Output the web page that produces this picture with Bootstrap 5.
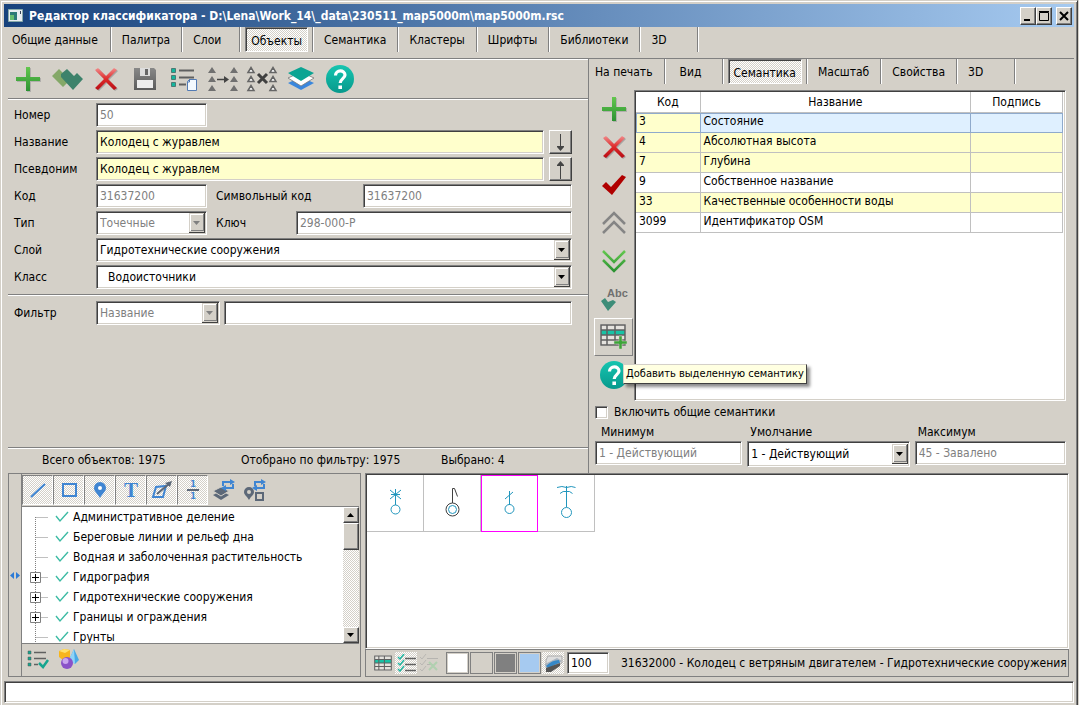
<!DOCTYPE html>
<html lang="ru">
<head>
<meta charset="utf-8">
<meta name="viewport" content="width=device-width, initial-scale=1">
<title>Редактор классификатора</title>
<link href="https://cdn.jsdelivr.net/npm/bootstrap@5.3.0/dist/css/bootstrap.min.css" rel="stylesheet">
<style>
:root { --face:#d4d0c8; --dark:#404040; --mid:#808080; --cream:#ffffcc; }
body { background:var(--face); color:#000; font:12px/16px "DejaVu Sans Condensed","Noto Sans",sans-serif; }
button, input, select { font:inherit; color:inherit; border-radius:0; }
button { background:none; border:0; padding:0; }
svg { display:block; flex:none; }
.win { min-height:100vh; margin-right:1px; padding:3px 3px 2px; border:1px solid var(--face); border-right-color:var(--dark); border-bottom:0; box-shadow:inset 1px 1px #fff, inset -1px 0 var(--mid); }
.titlebar { height:23px; padding:0 2px 0 4px; background:linear-gradient(90deg,#17427c,#a6caf0); color:#fff; font-size:12px; font-weight:700; }
.caption-text { margin-left:6px; }
.raised { background:var(--face); border:1px solid; border-color:#fff var(--dark) var(--dark) #fff; box-shadow:inset -1px -1px var(--mid); }
.cap { width:16px; height:18px; }
.sunk { background:#fff; border:1px solid; border-color:var(--mid) #fff #fff var(--mid); box-shadow:inset 1px 1px var(--dark), inset -1px -1px var(--face); }
.field { height:24px; padding:0 3px; min-width:0; outline:0; }
.field:disabled { color:var(--mid); opacity:1; }
.cream { background-color:var(--cream); }
select.field { appearance:none; padding-left:3px; background:#fff url("data:image/svg+xml,%3Csvg xmlns='http://www.w3.org/2000/svg' width='16' height='20'%3E%3Cpath fill='%23404040' d='M0 0h16v20H0z'/%3E%3Cpath fill='%23d4d0c8' d='M0 0h15v19H0z'/%3E%3Cpath fill='%23808080' d='M1 18h14V1h-1v16H1z'/%3E%3Cpath fill='%23fff' d='M1 1h13v1H2v16H1z'/%3E%3Cpath d='M4 8h7L7.500 12z'/%3E%3C/svg%3E") no-repeat right 1px center; }
select.field:disabled { background-image:url("data:image/svg+xml,%3Csvg xmlns='http://www.w3.org/2000/svg' width='16' height='20'%3E%3Cpath fill='%23404040' d='M0 0h16v20H0z'/%3E%3Cpath fill='%23d4d0c8' d='M0 0h15v19H0z'/%3E%3Cpath fill='%23808080' d='M1 18h14V1h-1v16H1z'/%3E%3Cpath fill='%23fff' d='M1 1h13v1H2v16H1z'/%3E%3Cpath fill='%23808080' d='M4 8h7L7.500 12z'/%3E%3C/svg%3E"); }
.tabs { height:25px; }
.tabs > div { border-right:1px solid var(--mid); box-shadow:1px 0 #fff; min-width:58px; padding:0 11px; display:flex; align-items:center; white-space:nowrap; }
.tabs > div:first-child { padding:0 12px 0 4px; }
.tabs > div.on { padding:0 4px 0 5px; }
.tabs.inner > div:first-child { padding:0 11px 0 6px; }
.tabs .on button { height:100%; padding:2px 5px 0; border:1px solid; border-color:var(--mid) #fff #fff var(--mid); box-shadow:inset 1px 1px var(--dark); }
.hatch { background:repeating-conic-gradient(#fff 0 25%,var(--face) 0 50%) 0 0/2px 2px; }
.groove-t { border-top:1px solid var(--mid); box-shadow:inset 0 1px #fff; }
.work { margin-top:6px; }
.objpane { flex:580 1 0; min-width:0; }
.sempane { flex:485 1 0; min-width:0; border-left:1px solid var(--mid); border-top:1px solid var(--mid); }
.tools { height:40px; }
.tools button, .vtools button { width:39px; height:38px; display:flex; align-items:center; justify-content:center; }
.tools button { height:40px; }
.form { display:grid; grid-template-columns:82px 1fr; row-gap:3px; padding:4px 16px 5px 6px; align-items:center; }
.form.filter { padding-top:6px; }
.form select.indent { padding-left:11px; }
.w-num { width:111px; }
.w-filter { width:124px; }
.sym-label { width:156px; padding-left:9px; flex:none; }
.key-label { width:89px; padding-left:9px; flex:none; }
.step { width:23px; height:24px; margin-left:5px; }
.counts { height:26px; padding-left:34px; }
.counts span:first-child { width:199px; }
.counts span:nth-child(2) { width:200px; }
.gridrow { padding:6px 8px 0 5px; }
.vtools { width:39px; margin-right:1px; flex:none; }
.hot { border:1px solid; border-color:#fff var(--mid) var(--mid) #fff; }
.gridbox { min-height:311px; padding:1px 2px 1px 1px; }
.sem { width:100%; table-layout:fixed; border-collapse:collapse; }
.sem th, .sem td { height:20px; padding:0 3px; border:solid #c0c0c0; border-width:0 1px 1px 0; font-weight:400; line-height:16px; }
.sem td { padding-bottom:2px; line-height:17px; }
.sem th { text-align:center; }
.sem .sel td { background:#dff0ff; border-color:#8faacc; box-shadow:inset 0 1px #8faacc; }
.sem .sel td:first-child { background:var(--cream); box-shadow:inset 1px 1px #8faacc; }
.tip { position:absolute; left:34px; top:280px; z-index:5; white-space:nowrap; font-size:11px; line-height:16px; padding:1px 2px; background:#ffffe1; border:1px solid; border-color:var(--face) var(--dark) var(--dark) var(--face); box-shadow:3px 3px 3px rgba(0,0,0,.45); }
.tick { appearance:none; width:13px; height:13px; margin:0; flex:none; }
.below { padding:3px 8px 6px 6px; }
.below .lab { padding-left:6px; }
.limits { display:grid; grid-template-columns:147fr 162fr 151fr; column-gap:5px; margin-top:4px; row-gap:1px; align-items:start; }
.limits label:not(.lab) { padding-left:3px; }
.limits select.field { height:26px; }
.lower { flex:1 1 204px; min-height:204px; }
.side { flex:0 1 353px; border:1px solid var(--mid); }
.split { width:13px; border-right:1px solid var(--mid); flex:none; }
.sidetools { height:32px; padding-top:1px; }
.sidebottom { height:32px; }
.tgl { width:31px; height:30px; display:flex; align-items:center; justify-content:center; }
.tgl.hatch { border:1px solid; border-color:var(--mid) #fff #fff var(--mid); }
.treebox { flex:1 1 0; min-height:0; overflow:hidden; margin-right:1px; background:#fff; border:solid var(--mid); border-width:1px 0; }
.tree li { height:20px; padding-left:8px; display:flex; align-items:center; white-space:nowrap; }
.tree li span { padding-left:4px; }
.bar { width:16px; flex:none; }
.bar .raised { width:16px; height:16px; display:flex; align-items:center; justify-content:center; }
.bar .thumb { height:27px; }
.viewer { margin-right:5px; }
.canvas { flex:1 1 0; min-height:100px; overflow:hidden; padding:1px; }
.cell { width:57px; height:57px; border:solid #c0c0c0; border-width:0 1px 1px 0; }
.cell.pick { border:1px solid #ff00ff; }
.objbar { height:28px; border:1px solid var(--mid); padding-left:6px; overflow:hidden; gap:1px; }
.sw { width:23px; height:22px; border:1px solid var(--mid); box-shadow:inset 0 0 0 1px var(--face); flex:none; }
.sw.first { margin-left:5px; background:#fff; }
.sw.dim { background:#808080; }
.sw.sky { background:#a6caf0; }
.mini { width:22px; height:22px; flex:none; display:flex; align-items:center; justify-content:center; }
.scale { width:42px; height:22px; margin-left:2px; flex:none; }
.info { margin:0 1px 0 11px; overflow:hidden; }
.status { height:22px; outline:0; }
</style>
</head>
<body>
<svg width="0" height="0" class="position-absolute" aria-hidden="true">
<defs>
<linearGradient id="gr" x2="0" y2="1"><stop stop-color="#63c74e"/><stop offset="1" stop-color="#2b9232"/></linearGradient>
<linearGradient id="rd" x2="0" y2="1"><stop stop-color="#f28a8a"/><stop offset=".5" stop-color="#dd2a2a"/><stop offset="1" stop-color="#b80c14"/></linearGradient>
<linearGradient id="tl" x2="0" y2="1"><stop stop-color="#16c5b0"/><stop offset="1" stop-color="#07998c"/></linearGradient>
<linearGradient id="gy" x2="0" y2="1"><stop stop-color="#888"/><stop offset="1" stop-color="#5c5c5c"/></linearGradient>
</defs>
<symbol id="plus" viewBox="0 0 28 28"><path d="M13 3h4v10h10v4H17v10h-4V17H3v-4h10z" fill="#999" opacity=".6"/><path d="M12 2h4v10h10v4H16v10h-4V16H2v-4h10z" fill="url(#gr)"/></symbol>
<symbol id="cross" viewBox="0 0 28 28"><path d="M4 6l3-2 8 8 8-8 3 2-9 9 9 9-3 2-8-8-8 8-3-2 9-9z" fill="#888" opacity=".6"/><path d="M3 5l3-2 8 8 8-8 3 2-9 9 9 9-3 2-8-8-8 8-3-2 9-9z" fill="url(#rd)"/></symbol>
<symbol id="help" viewBox="0 0 28 28"><circle cx="14" cy="14" r="14" fill="url(#tl)"/><path d="M9.500 10.500c0-6 9.500-6 9.500-.5 0 3.500-4.800 3.800-4.800 8" fill="none" stroke="#fff" stroke-width="3.200"/><rect x="12.400" y="20.500" width="3.600" height="3.500" fill="#fff"/></symbol>
<symbol id="chk" viewBox="0 0 14 12"><path d="M1 5l4 5 8-9" fill="none" stroke="#3dbba4" stroke-width="1.400"/></symbol>
<symbol id="tab" viewBox="0 0 26 22"><path d="M0 0h26v22H0z" fill="#fff" opacity=".4"/><path d="M1 6h24v5H1z" fill="#17c3a5"/><path d="M1 1h24v20H1zM1 6h24M1 11h24M1 16h24M7 1v20M15 1v20" fill="none" stroke="#606060" stroke-width="1.500"/></symbol>
<symbol id="leaf" viewBox="0 0 25 20"><path d="M5.500 0v20M5.500 10.500H18" stroke="#808080" stroke-dasharray="1 1"/></symbol>
<symbol id="node" viewBox="0 0 25 20"><path d="M5.500 0v20M5.500 10.500H18" stroke="#808080" stroke-dasharray="1 1"/><path d="M.5 5.500h10v10H.5z" fill="#fff" stroke="#808080"/><path d="M2 10.500h7M5.500 7v7" stroke="#000"/></symbol>
</svg>

<div class="win d-flex flex-column">
  <header class="titlebar d-flex align-items-center">
    <svg width="15" height="13"><path fill="#e9eef2" stroke="#8aa" d="M.5.5h14v12H.5z"/><path fill="#2d7a78" d="M2 3h7v8H2z"/><path fill="#68bf72" d="M2 6h4v5H2z"/><path stroke="#345" d="M12.500 2v3"/></svg>
    <span class="caption-text me-auto text-nowrap">Редактор классификатора - D:\Lena\Work_14\_data\230511_map5000m\map5000m.rsc</span>
    <button class="raised cap" aria-label="Свернуть"><svg width="14" height="15"><path d="M3 11h6v2H3z"/></svg></button>
    <button class="raised cap" aria-label="Развернуть"><svg width="14" height="15"><path d="M2.500 4.500h9v8h-9zM2 3.500h10" fill="none" stroke="#000"/></svg></button>
    <button class="raised cap ms-1" aria-label="Закрыть"><svg width="14" height="15"><path d="M3 4l8 8M11 4l-8 8" stroke="#000" stroke-width="2"/></svg></button>
  </header>

  <nav class="tabs d-flex ms-1">
    <div><button>Общие данные</button></div><div><button>Палитра</button></div><div><button>Слои</button></div>
    <div class="on"><button class="hatch">Объекты</button></div>
    <div><button>Семантика</button></div><div><button>Кластеры</button></div><div><button>Шрифты</button></div><div><button>Библиотеки</button></div><div><button>3D</button></div>
  </nav>

  <main class="work d-flex ms-1">
    <section class="objpane d-flex flex-column">
      <div class="tools groove-t d-flex">
        <button aria-label="Добавить"><svg width="28" height="28"><use href="#plus"/></svg></button>
        <button aria-label="Копировать"><svg width="32" height="24"><path d="M1 9l7-7 5 5 3-3 5 7-9 9z" fill="#84a868"/><path d="M10 7l6-5 4 4 3 3 3-3 6 6-10 11L10 10z" fill="#3d826b"/></svg></button>
        <button aria-label="Удалить"><svg width="28" height="28"><use href="#cross"/></svg></button>
        <button aria-label="Сохранить"><svg width="24" height="24"><path d="M1 1h20l2 2v20H1z" fill="url(#gy)"/><path d="M7 1h10v8H7z" fill="#ddd"/><path d="M12 2h3v6h-3z" fill="#666"/><path d="M4 13h16v8H4z" fill="#eee"/></svg></button>
        <button aria-label="Список"><svg width="28" height="26"><path d="M1.500 2.500h4v4h-4zM1.500 9.500h4v4h-4zM1.500 16.500h4v4h-4z" fill="#14b59d" stroke="#4c7a74"/><path d="M9 4.500h15M9 11.500h15M9 18.500h7" stroke="#606060" stroke-width="2"/><path d="M19.500 13.500h7v11h-9v-9z" fill="#f4faff" stroke="#537bb4"/><path d="M19.500 13v3h-2" fill="none" stroke="#537bb4"/></svg></button>
        <button aria-label="Заменить"><svg width="32" height="26"><path d="M1 7l4-6 4 6zM1 16l4-6 4 6zM1 25l4-6 4 6zM23 7l4-6 4 6zM23 16l4-6 4 6zM23 25l4-6 4 6z" fill="#707070"/><path d="M10 13.500h8" stroke="#444" stroke-width="1.500"/><path d="M17 10l5 3.500-5 3.500z" fill="#444"/></svg></button>
        <button aria-label="Исключить"><svg width="32" height="26"><path d="M2 6.500l3-5 3 5zM2 15.500l3-5 3 5zM2 24.500l3-5 3 5zM24 6.500l3-5 3 5zM24 15.500l3-5 3 5zM24 24.500l3-5 3 5z" fill="#fff" stroke="#666" stroke-width="1.500"/><path d="M12 8l9 9M21 8l-9 9" stroke="#404040" stroke-width="3"/></svg></button>
        <button aria-label="Слои"><svg width="28" height="26"><path d="M1 17l13-6 13 6-13 7z" fill="#3a87dd"/><path d="M1 12l13-6 13 6-13 8z" fill="#fff" stroke="#777" stroke-width=".8"/><path d="M1 7l13-6 13 6-13 8z" fill="#0ba493"/></svg></button>
        <button aria-label="Помощь"><svg width="28" height="28"><use href="#help"/></svg></button>
      </div>
      <form class="form groove-t">
        <label for="num">Номер</label><input id="num" class="field sunk w-num" value="50" disabled>
        <label for="nam">Название</label><div class="d-flex"><input id="nam" class="field sunk cream flex-grow-1" value="Колодец с журавлем"><button type="button" class="raised step" aria-label="Вниз"><svg width="21" height="22"><path d="M10.500 3v14" stroke="#444"/><path d="M7 15h7v1l-3.500 4L7 16z" fill="#444"/></svg></button></div>
        <label for="psv">Псевдоним</label><div class="d-flex"><input id="psv" class="field sunk cream flex-grow-1" value="Колодец с журавлем"><button type="button" class="raised step" aria-label="Вверх"><svg width="21" height="22"><path d="M10.500 5v16" stroke="#444"/><path d="M7 8h7V7l-3.500-4L7 7z" fill="#444"/></svg></button></div>
        <label for="cod">Код</label><div class="d-flex align-items-center"><input id="cod" class="field sunk w-num" value="31637200" disabled><label for="sym" class="sym-label">Символьный код</label><input id="sym" class="field sunk flex-grow-1" value="31637200" disabled></div>
        <label for="typ">Тип</label><div class="d-flex align-items-center"><select id="typ" class="field sunk w-num" disabled><option>Точечные</option></select><label for="key" class="key-label">Ключ</label><input id="key" class="field sunk flex-grow-1" value="298-000-P" disabled></div>
        <label for="lay">Слой</label><select id="lay" class="field sunk"><option>Гидротехнические сооружения</option></select>
        <label for="cls">Класс</label><select id="cls" class="field sunk indent"><option>Водоисточники</option></select>
      </form>
      <form class="form filter groove-t flex-grow-1 align-content-start">
        <label for="flt">Фильтр</label><div class="d-flex"><select id="flt" class="field sunk w-filter me-1" disabled><option>Название</option></select><input class="field sunk flex-grow-1" aria-label="Текст фильтра"></div>
      </form>
      <div class="groove-t d-flex pt-1 counts"><span>Всего объектов: 1975</span><span>Отобрано по фильтру: 1975</span><span>Выбрано: 4</span></div>
    </section>

    <section class="sempane">
      <nav class="tabs inner d-flex">
        <div><button>На печать</button></div><div><button class="ps-1">Вид</button></div>
        <div class="on"><button class="hatch">Семантика</button></div>
        <div><button>Масштаб</button></div><div><button>Свойства</button></div><div><button>3D</button></div>
      </nav>
      <div class="gridrow d-flex position-relative">
        <div class="vtools">
          <button aria-label="Добавить семантику"><svg width="28" height="28"><use href="#plus"/></svg></button>
          <button aria-label="Удалить семантику"><svg width="28" height="28"><use href="#cross"/></svg></button>
          <button aria-label="Отметить"><svg width="26" height="24"><path d="M1 13l4-4 5 5L21 2l4 2-14 18z" fill="#b00000"/></svg></button>
          <button aria-label="Выше"><svg width="26" height="26" fill="none" stroke="#858585" stroke-width="2.500"><path d="M2 14L13 3l11 11M2 23l11-11 11 11"/></svg></button>
          <button aria-label="Ниже"><svg width="26" height="26" fill="none" stroke="url(#gr)" stroke-width="2.500"><path d="M2 3l11 11L24 3M2 12l11 11 11-11"/></svg></button>
          <button aria-label="Переименовать"><svg width="30" height="26"><text x="8" y="11" font-family="Liberation Sans,sans-serif" font-weight="700" font-size="11" fill="#707070">Abc</text><path d="M2 15l4-3 3 4 5-2 3 2-8 9z" fill="#3d8d78"/></svg></button>
          <button class="hot" aria-label="Добавить выделенную семантику"><svg width="28" height="26"><use href="#tab" width="26" height="22"/><path d="M19 12h3v5h5v3h-5v5h-3v-5h-5v-3h5z" fill="#3da539" stroke="#d4d0c8" stroke-width=".5"/></svg></button>
          <button aria-label="Справка"><svg width="28" height="28"><use href="#help"/></svg></button>
        </div>
        <div class="gridbox sunk flex-grow-1">
          <table class="sem">
            <colgroup><col style="width:64px"><col><col style="width:92px"></colgroup>
            <thead><tr><th>Код</th><th>Название</th><th>Подпись</th></tr></thead>
            <tbody>
              <tr class="sel"><td>3</td><td>Состояние</td><td></td></tr>
              <tr class="cream"><td>4</td><td>Абсолютная высота</td><td></td></tr>
              <tr class="cream"><td>7</td><td>Глубина</td><td></td></tr>
              <tr><td>9</td><td>Собственное название</td><td></td></tr>
              <tr class="cream"><td>33</td><td>Качественные особенности воды</td><td></td></tr>
              <tr><td>3099</td><td>Идентификатор OSM</td><td></td></tr>
            </tbody>
          </table>
        </div>
        <div class="tip" role="tooltip">Добавить выделенную семантику</div>
      </div>
      <div class="below">
        <div class="d-flex align-items-center"><input type="checkbox" id="all" class="tick sunk"><label for="all" class="lab">Включить общие семантики</label></div>
        <div class="limits">
          <label for="mn" class="lab">Минимум</label><label for="df">Умолчание</label><label for="mx">Максимум</label>
          <input id="mn" class="field sunk" value="1 - Действующий" disabled>
          <select id="df" class="field sunk"><option>1 - Действующий</option></select>
          <input id="mx" class="field sunk" value="45 - Завалено" disabled>
        </div>
      </div>
    </section>
  </main>

  <div class="lower d-flex ms-1 gap-1">
    <aside class="side d-flex">
      <div class="split d-flex align-items-center"><svg width="12" height="9"><path d="M1 4.500L5 1v7zM11 4.500L7 1v7z" fill="#2d7bd6"/></svg></div>
      <div class="d-flex flex-column flex-grow-1 overflow-hidden">
        <div class="sidetools d-flex">
          <button class="tgl hatch" aria-label="Линии"><svg width="20" height="20"><path d="M3 17L17 4" stroke="#3f85d2" stroke-width="2"/></svg></button>
          <button class="tgl hatch" aria-label="Площади"><svg width="20" height="20"><path d="M4 4h13v12H4z" fill="none" stroke="#3f85d2" stroke-width="2"/></svg></button>
          <button class="tgl hatch" aria-label="Точки"><svg width="20" height="20"><path d="M10 18C7 13 4 11 4 8a6 6 0 0 1 12 0c0 3-3 5-6 10z" fill="#3f85d2"/><circle cx="10" cy="8" r="2" fill="#fff"/></svg></button>
          <button class="tgl hatch" aria-label="Подписи"><svg width="20" height="26"><text x="10" y="20" text-anchor="middle" font-family="Liberation Serif,serif" font-weight="700" font-size="21" fill="#3f85d2">T</text></svg></button>
          <button class="tgl hatch" aria-label="Векторы"><svg width="22" height="22"><path d="M2 18L5 8l10-1-3 11z" fill="none" stroke="#3f85d2" stroke-width="2"/><path d="M6 15L19 4" stroke="#5c6878" stroke-width="2"/><path d="M21 2l-7 2 5 4z" fill="#5c6878"/></svg></button>
          <button class="tgl hatch" aria-label="Шаблоны"><svg width="16" height="24"><path d="M2 12h12" stroke="#5c6878" stroke-width="2"/><text x="8" y="9" text-anchor="middle" font-size="9" font-weight="700" fill="#3f85d2">1</text><text x="8" y="21" text-anchor="middle" font-size="9" font-weight="700" fill="#3f85d2">1</text></svg></button>
          <button class="tgl" aria-label="Порядок слоёв"><svg width="24" height="24"><path d="M1 17l8-4 8 4-8 5z" fill="#5c6878"/><path d="M1 13l8-4 8 4-8 5z" fill="#5c6878" stroke="#d4d0c8"/><path d="M11 8V4h10M21 6v4H11" fill="none" stroke="#3f85d2" stroke-width="2"/><path d="M18 1l5 3-5 3zM14 7l-5 3 5 3z" fill="#3f85d2"/></svg></button>
          <button class="tgl" aria-label="Порядок объектов"><svg width="24" height="24"><path d="M6 22c-2-4-5-5-5-8a5 5 0 0 1 10 0c0 3-3 4-5 8z" fill="#5c6878"/><circle cx="6" cy="14" r="2" fill="#d4d0c8"/><path d="M13 15h7v7h-7z" fill="none" stroke="#5c6878" stroke-width="2"/><path d="M12 8V4h9M21 6v4H12" fill="none" stroke="#3f85d2" stroke-width="2"/><path d="M18 1l5 3-5 3zM14 7l-5 3 5 3z" fill="#3f85d2"/></svg></button>
        </div>
        <div class="treebox d-flex">
          <ul class="tree list-unstyled mb-0 flex-grow-1 overflow-hidden">
            <li><svg width="25" height="20"><path d="M5.500 10v10M5.500 10.500H18" stroke="#808080" stroke-dasharray="1 1"/></svg><svg width="14" height="12"><use href="#chk"/></svg><span>Административное деление</span></li>
            <li><svg width="25" height="20"><use href="#leaf"/></svg><svg width="14" height="12"><use href="#chk"/></svg><span>Береговые линии и рельеф дна</span></li>
            <li><svg width="25" height="20"><use href="#leaf"/></svg><svg width="14" height="12"><use href="#chk"/></svg><span>Водная и заболоченная растительность</span></li>
            <li><svg width="25" height="20"><use href="#node"/></svg><svg width="14" height="12"><use href="#chk"/></svg><span>Гидрография</span></li>
            <li><svg width="25" height="20"><use href="#node"/></svg><svg width="14" height="12"><use href="#chk"/></svg><span>Гидротехнические сооружения</span></li>
            <li><svg width="25" height="20"><use href="#node"/></svg><svg width="14" height="12"><use href="#chk"/></svg><span>Границы и ограждения</span></li>
            <li><svg width="25" height="20"><use href="#leaf"/></svg><svg width="14" height="12"><use href="#chk"/></svg><span>Грунты</span></li>
          </ul>
          <div class="bar hatch d-flex flex-column">
            <button class="raised" aria-label="Прокрутить вверх"><svg width="8" height="4"><path d="M0 4h7L3.500 0z"/></svg></button>
            <div class="raised thumb"></div>
            <button class="raised mt-auto" aria-label="Прокрутить вниз"><svg width="8" height="4"><path d="M0 0h7L3.500 4z"/></svg></button>
          </div>
        </div>
        <div class="sidebottom d-flex">
          <button class="tgl" aria-label="Отметить все"><svg width="22" height="20"><path d="M1 2h3v3H1zM1 8h3v3H1zM1 14h3v3H1z" fill="#14a58f" stroke="#555" stroke-width=".5"/><path d="M7 3.500h12M7 9.500h12M7 15.500h4" stroke="#606060" stroke-width="1.500"/><path d="M12 14l4 4 5-7" fill="none" stroke="#14a58f" stroke-width="2.500"/></svg></button>
          <button class="tgl" aria-label="Вид объектов"><svg width="22" height="22"><path d="M1 3l5-2 6 1v8l-7 2-4-3z" fill="#f7b51d"/><path d="M1 3l6 2 5-3-6-1z" fill="#ffe06b"/><path d="M16 1l5 11-4 4-6-4z" fill="#48a9e6"/><path d="M16 1l1 15-6-4z" fill="#8fd3f7"/><circle cx="9" cy="15" r="6" fill="#8a52c8"/><circle cx="7.500" cy="13" r="3" fill="#c9a5ee"/></svg></button>
        </div>
      </div>
    </aside>

    <section class="viewer d-flex flex-column flex-grow-1 overflow-hidden">
      <div class="canvas sunk d-flex align-items-start">
        <div class="cell"><svg width="56" height="56" fill="none" stroke="#2196bd"><path d="M28.500 14v16M23 15l11 9M34 15l-11 9M24 19.500h9"/><circle cx="28.500" cy="34.500" r="4.500"/></svg></div>
        <div class="cell"><svg width="56" height="56" fill="none" stroke="#404040"><path d="M28.500 28V13.500h2l3 8"/><circle cx="28.500" cy="34.500" r="6.500"/><circle cx="28.500" cy="34.500" r="4" stroke="#2196bd"/></svg></div>
        <div class="cell pick"><svg width="55" height="55" fill="none" stroke="#2196bd"><path d="M27.500 15v14M23 23l8-7"/><circle cx="27.500" cy="33" r="4.500"/></svg></div>
        <div class="cell"><svg width="56" height="56" fill="none" stroke="#2196bd"><path d="M28.500 11v21M19 12.500q5-2 9.500 0 5-2 9 0M22 18.500q3-3 6.500-2 3-1 6 2"/><circle cx="28.500" cy="37.500" r="5"/></svg></div>
      </div>
      <div class="objbar d-flex align-items-center">
        <button class="mini" aria-label="Таблица"><svg width="18" height="16"><use href="#tab"/></svg></button>
        <button class="mini hatch" aria-label="Список с отметками"><svg width="20" height="18"><path d="M2 3l2 2 4-5M2 9l2 2 4-5M2 15l2 2 4-5" fill="none" stroke="#20b5a0" stroke-width="1.500"/><path d="M9 4.500h11M9 10.500h11M9 16.500h11" stroke="#606060" stroke-width="1.500"/></svg></button>
        <button class="mini" disabled aria-label="Снять отметки"><svg width="20" height="18" opacity=".5"><path d="M1 3l2 2 4-5M1 9l2 2 4-5M1 15l2 2 4-5" fill="none" stroke="#a0a0a0"/><path d="M8 4.500h11M8 10.500h6" stroke="#999"/><path d="M10 8l8 8M18 8l-8 8" stroke="#8fd09a" stroke-width="2"/></svg></button>
        <button class="sw first" aria-label="Белый фон"></button><button class="sw" aria-label="Серый фон"></button><button class="sw dim" aria-label="Тёмный фон"></button><button class="sw sky" aria-label="Голубой фон"></button>
        <button class="mini hatch" aria-label="Печать"><svg width="20" height="20"><path d="M5 3h14v7l-5 3H3V7z" fill="#dedede" stroke="#aaa"/><path d="M2 11l12-6 5 3-11 8H3z" fill="#a9b4bf"/><path d="M3 13q6-6 13-6l1 3q-6 1-11 6z" fill="#3588c8"/><path d="M3 15l14-5v3l-9 6H3z" fill="#555"/></svg></button>
        <input class="field sunk scale" value="100" aria-label="Масштаб, %">
        <span class="info text-nowrap">31632000 - Колодец с ветряным двигателем - Гидротехнические сооружения</span>
      </div>
    </section>
  </div>
  <input class="status sunk w-100 mt-1" aria-label="Строка состояния">
</div>
<script src="https://cdn.jsdelivr.net/npm/bootstrap@5.3.0/dist/js/bootstrap.bundle.min.js"></script>
</body>
</html>
